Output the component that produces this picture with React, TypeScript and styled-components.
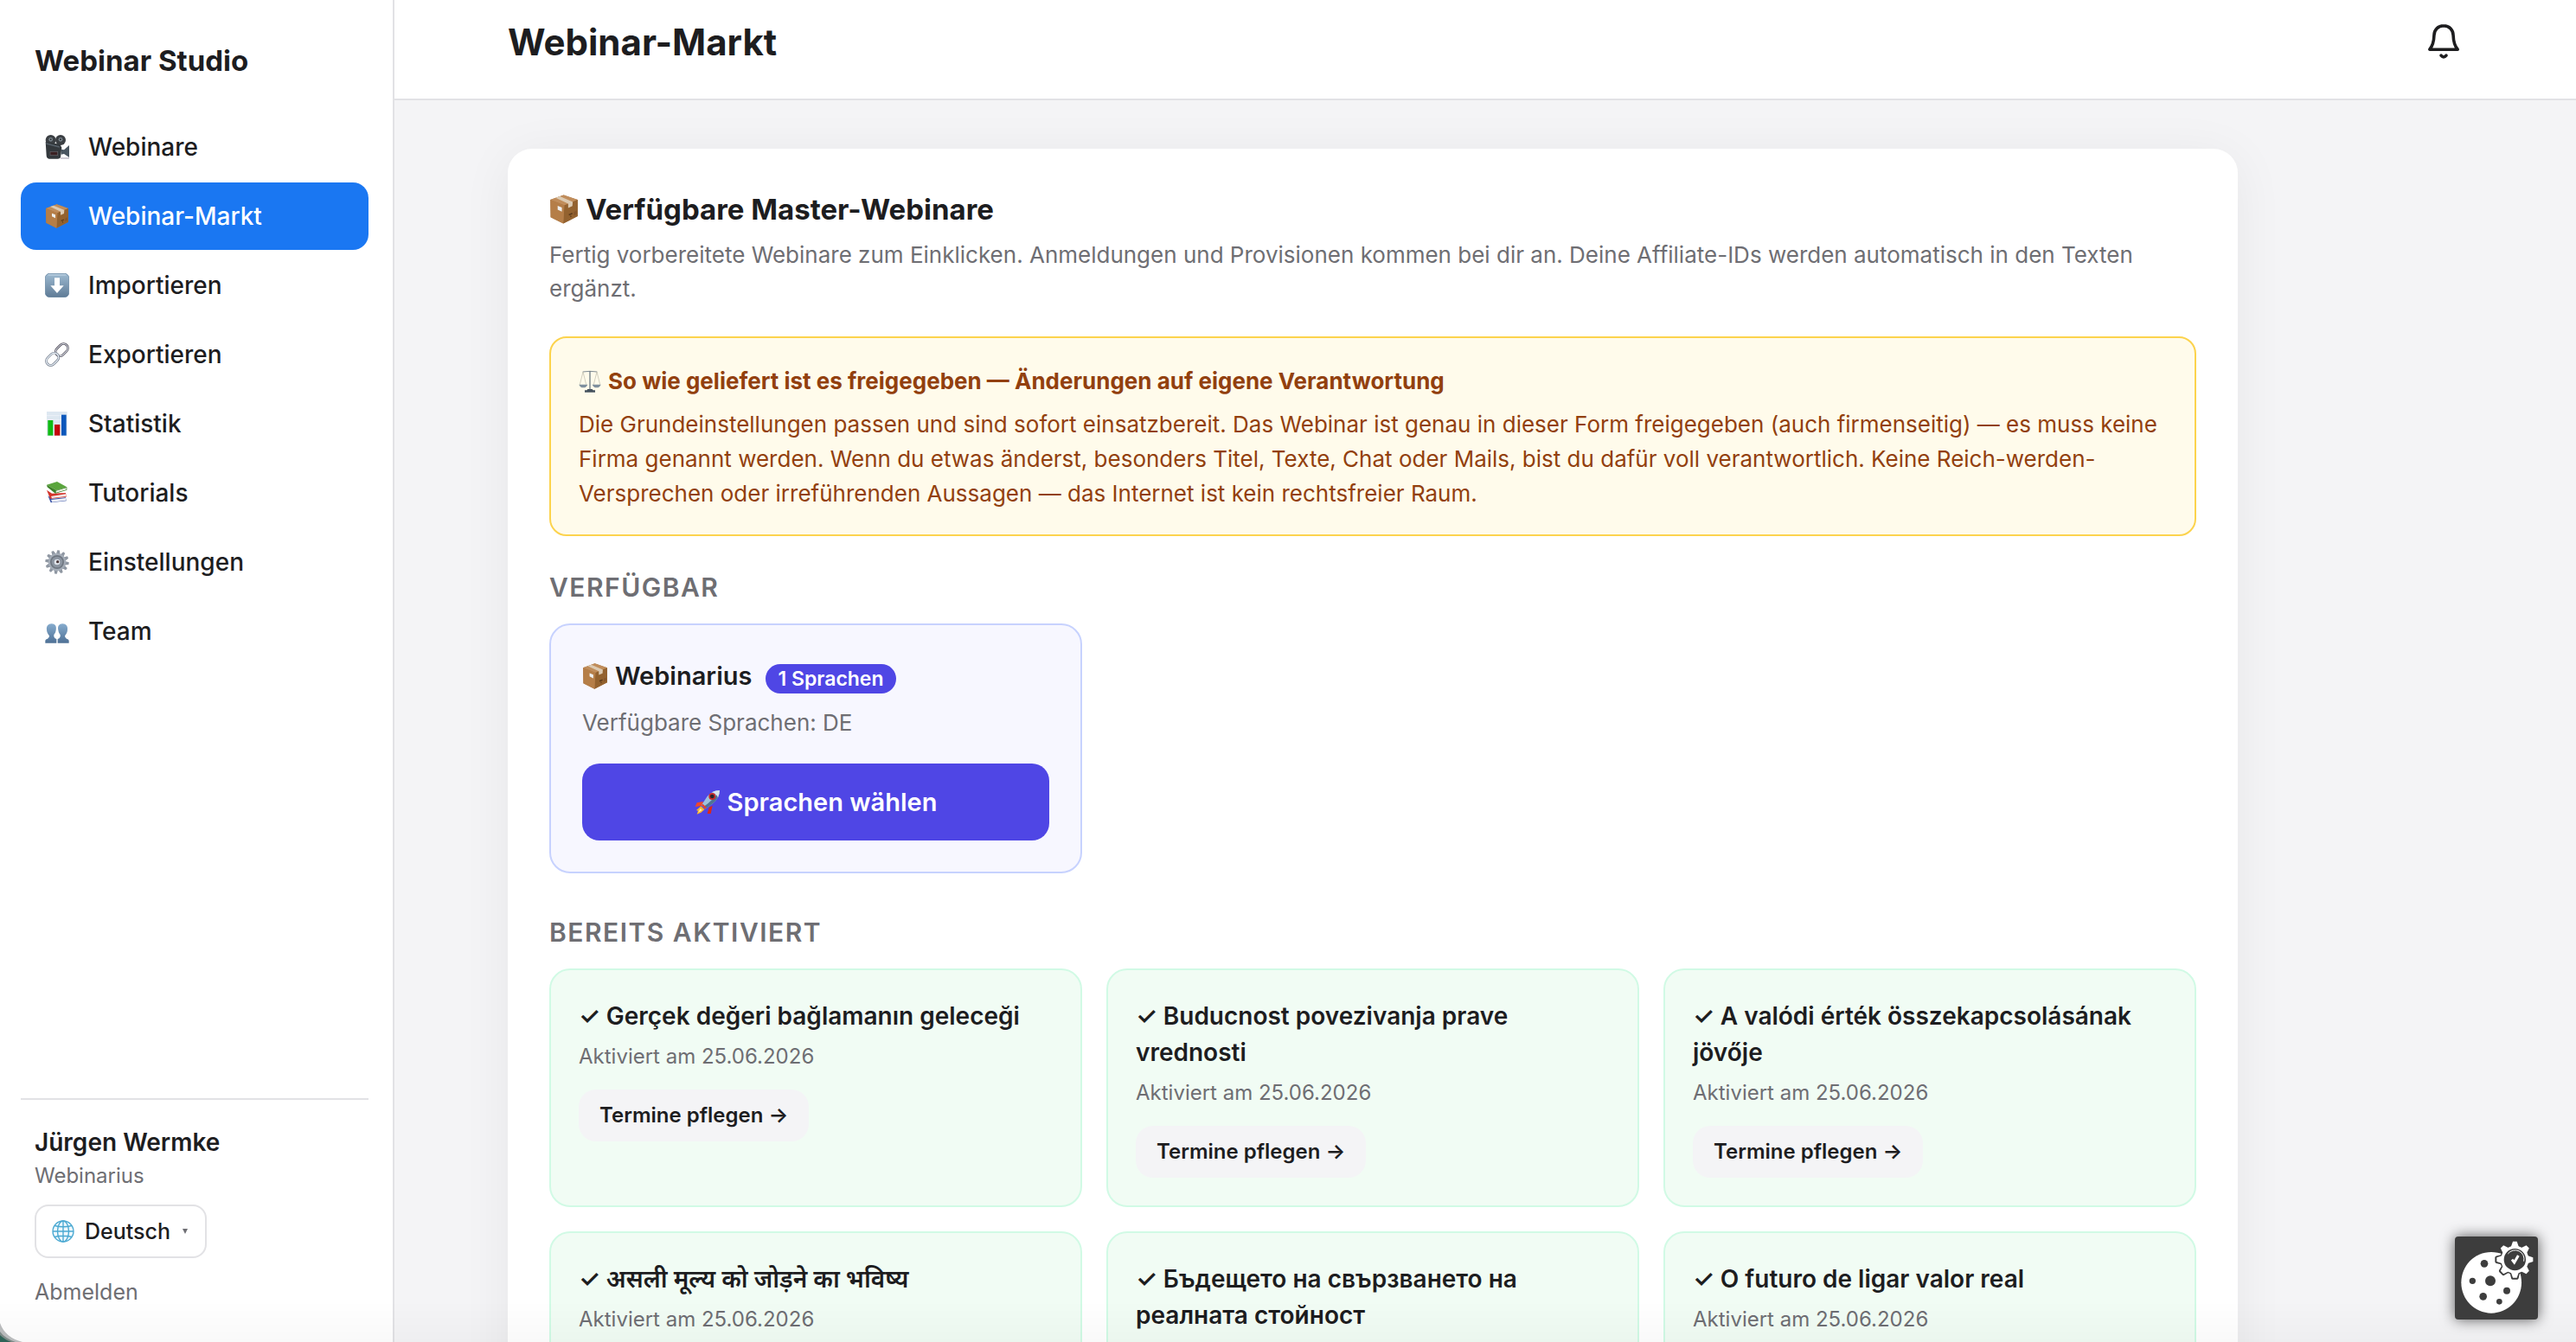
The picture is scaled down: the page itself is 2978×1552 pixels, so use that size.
import React from "react";
import styled, { createGlobalStyle } from "styled-components";

const GlobalStyle = createGlobalStyle`
  *, *::before, *::after { box-sizing: border-box; }
  body {
    margin: 0;
    background: #f4f4f6;
    color: #1d1d1f;
    font-family: Inter, "Noto Sans", "Liberation Sans", sans-serif;
    font-size: 26px;
    line-height: 1.5;
  }
  h1, h2, h3, p, ul { margin: 0; padding: 0; }
  button, select { font: inherit; color: inherit; }
`;

/* ---------- Icons ---------- */

const Glyph = styled.svg<{ $size: number }>`
  width: ${(p) => p.$size}px;
  height: ${(p) => p.$size}px;
  flex: none;
  display: block;
`;

type IconProps = { size?: number };

const CameraIcon = ({ size = 28 }: IconProps) => (
  <Glyph $size={size} viewBox="0 0 84 84" aria-hidden="true">
    <circle cx="20" cy="18" r="18" fill="#3b3f43" />
    <circle cx="54" cy="18" r="18" fill="#3b3f43" />
    <circle cx="20" cy="16" r="7" fill="#7d8890" />
    <circle cx="54" cy="16" r="7" fill="#7d8890" />
    <circle cx="20" cy="16" r="3" fill="#2a2d30" />
    <circle cx="54" cy="16" r="3" fill="#2a2d30" />
    <path d="M2 24 L52 32 L58 44 L54 78 Q52 83 44 83 L14 83 Q6 82 5 72 Z" fill="#33383c" />
    <path d="M4 30 L50 42" stroke="#57616a" strokeWidth="4" />
    <rect x="18" y="58" width="26" height="13" fill="#3a2022" stroke="#63646a" strokeWidth="2" />
    <path d="M56 50 L66 52 L84 36 L84 78 L66 66 L56 68 Z" fill="#4a5660" />
    <path d="M54 81 L84 81" stroke="#b9b3bf" strokeWidth="4" />
  </Glyph>
);

const PackageIcon = ({ size = 28 }: IconProps) => (
  <Glyph $size={size} viewBox="0 0 84 84" aria-hidden="true">
    <path d="M41 1 L81 15 L81 62 L40 83 L4 65 L3 15 Z" fill="#a97445" />
    <path d="M41 1 L81 15 L43 31 L3 15 Z" fill="#c08d5b" />
    <path d="M43 31 L81 15 L81 62 L40 83 Z" fill="#93622f" />
    <path d="M3 15 L43 31 L40 83 L4 65 Z" fill="#b57e48" />
    <path d="M18 9 L30 5 L67 21 L66 33 L54 38 L54 26 Z" fill="#dccab2" />
    <path d="M24 32 L36 37 L36 49 L24 43 Z" fill="#eef0f0" />
    <path d="M56 58 L66 54 M60 63 L63 62" stroke="#5b3a1a" strokeWidth="4" />
    <path d="M70 50 L78 46 L78 56 L70 60 Z" fill="#85552a" />
  </Glyph>
);

const ImportIcon = ({ size = 28 }: IconProps) => (
  <Glyph $size={size} viewBox="0 0 84 84" aria-hidden="true">
    <defs>
      <linearGradient id="imp" x1="0" y1="0" x2="0" y2="1">
        <stop offset="0" stopColor="#9dbad1" />
        <stop offset="1" stopColor="#5f7b96" />
      </linearGradient>
    </defs>
    <rect x="1" y="1" width="82" height="82" rx="15" fill="url(#imp)" stroke="#5c7d9c" strokeWidth="2" />
    <path d="M12 6 H72" stroke="#c3d6e5" strokeWidth="3" strokeLinecap="round" />
    <path d="M33 16 H51 V43 H65 L42 69 L19 43 H33 Z" fill="#fff" />
  </Glyph>
);

const LinkIcon = ({ size = 28 }: IconProps) => (
  <Glyph $size={size} viewBox="0 0 84 84" aria-hidden="true">
    <g fill="none" strokeLinecap="round">
      <rect x="34" y="11" width="48" height="30" rx="15" transform="rotate(-45 58 26)" stroke="#55505c" strokeWidth="8" />
      <rect x="34" y="11" width="48" height="30" rx="15" transform="rotate(-45 58 26)" stroke="#dfe5ee" strokeWidth="3" />
      <rect x="2" y="43" width="48" height="30" rx="15" transform="rotate(-45 26 58)" stroke="#66707f" strokeWidth="8" />
      <rect x="2" y="43" width="48" height="30" rx="15" transform="rotate(-45 26 58)" stroke="#e6edf5" strokeWidth="4" />
    </g>
  </Glyph>
);

const ChartIcon = ({ size = 28 }: IconProps) => (
  <Glyph $size={size} viewBox="0 0 84 84" aria-hidden="true">
    <rect x="6" y="0" width="71" height="84" fill="#dde7f1" />
    <path d="M6 14 H77 M6 28 H77" stroke="#f2f6fa" strokeWidth="2" />
    <rect x="10" y="30" width="18" height="53" fill="#10bb14" />
    <rect x="33" y="45" width="19" height="38" fill="#c4060a" />
    <rect x="57" y="11" width="17" height="72" fill="#0b57bb" />
  </Glyph>
);

const BooksIcon = ({ size = 28 }: IconProps) => (
  <Glyph $size={size} viewBox="0 0 84 84" aria-hidden="true">
    <path d="M10 52 L20 76 L74 70 L72 58 L24 62 Z" fill="#3c56a8" />
    <path d="M21 66 L73 60 L73 68 L25 74 Z" fill="#eef0f6" />
    <path d="M6 32 L18 62 L74 56 L72 42 L24 44 Z" fill="#d3352b" />
    <path d="M21 54 L72 46 L73 54 L24 60 Z" fill="#f3ecea" />
    <path d="M6 14 L42 3 L76 22 L40 33 Z" fill="#5aa53c" />
    <path d="M6 14 L8 22 L36 44 L76 32 L76 22 L40 33 Z" fill="#3c7f27" />
    <path d="M38 35 L74 25 L74 31 L38 41 Z" fill="#f2f5ec" />
  </Glyph>
);

const GearIcon = ({ size = 28 }: IconProps) => (
  <Glyph $size={size} viewBox="0 0 84 84" aria-hidden="true">
    {Array.from({ length: 12 }, (_, i) => (
      <path key={i} d="M37 1 H45 L49 16 H35 Z" fill="#8f97a2" transform={`rotate(${i * 30 + 8} 42 42)`} />
    ))}
    <circle cx="42" cy="42" r="31" fill="#a4acb7" />
    <circle cx="42" cy="42" r="24" fill="#6f7781" />
    <circle cx="42" cy="42" r="19" fill="#8c95a1" />
    <circle cx="42" cy="42" r="10" fill="#dfe4ea" />
    <circle cx="44" cy="41" r="5" fill="#4c3a3c" />
  </Glyph>
);

const TeamIcon = ({ size = 28 }: IconProps) => (
  <Glyph $size={size} viewBox="0 0 84 84" aria-hidden="true">
    <defs>
      <linearGradient id="team" x1="0" y1="0" x2="0" y2="1">
        <stop offset="0" stopColor="#86acce" />
        <stop offset="1" stopColor="#4e7095" />
      </linearGradient>
    </defs>
    <path
      d="M23 16 C35 16 41 25 38 38 C37 46 34 50 31 54 C30 62 32 66 40 69 V83 H1 V74 Q2 70 9 68 Q15 66 15 58 C9 50 6 45 6 37 C4 25 11 16 23 16 Z"
      fill="url(#team)"
    />
    <path
      d="M61 16 C49 16 43 25 46 38 C47 46 50 50 53 54 C54 62 52 66 44 69 V83 H83 V74 Q82 70 75 68 Q69 66 69 58 C75 50 78 45 78 37 C80 25 73 16 61 16 Z"
      fill="url(#team)"
    />
  </Glyph>
);

const GlobeIcon = ({ size = 26 }: IconProps) => (
  <Glyph $size={size} viewBox="0 0 76 76" aria-hidden="true">
    <g fill="none" stroke="#4ba9d2" strokeWidth="4">
      <circle cx="38" cy="38" r="35" fill="#eef8fd" />
      <ellipse cx="38" cy="38" rx="19" ry="35" />
      <path d="M38 3 V73 M3 38 H73 M9 19 Q38 26 67 19 M9 57 Q38 50 67 57" />
    </g>
  </Glyph>
);

const ScalesIcon = ({ size = 26 }: IconProps) => (
  <Glyph $size={size} viewBox="0 0 78 78" aria-hidden="true">
    <path d="M14 6 Q39 2 64 6" stroke="#7f8b93" strokeWidth="3" fill="none" />
    <path d="M39 3 V66" stroke="#6f7c86" strokeWidth="4" />
    <path d="M15 6 L4 50 M15 6 L26 50 M63 6 L52 50 M63 6 L74 50" stroke="#b9b8a8" strokeWidth="2" />
    <path d="M1 50 H31 Q27 61 16 61 Q5 61 1 50 Z M47 50 H77 Q73 61 62 61 Q51 61 47 50 Z" fill="#7e8f9d" />
    <path d="M31 66 H47 L50 70 H57 V77 H21 V70 H28 Z" fill="#45525e" />
  </Glyph>
);

const RocketIcon = ({ size = 30 }: IconProps) => (
  <Glyph $size={size} viewBox="0 0 90 90" aria-hidden="true">
    <path d="M30 42 L8 46 L2 60 L26 56 Z" fill="#f0472a" />
    <path d="M50 62 L44 84 L56 84 L62 56 Z" fill="#d9291c" />
    <path d="M22 58 L6 72 L12 74 L8 86 L22 80 L34 70 Z" fill="#fbb62f" />
    <path d="M20 66 L12 80 L26 72 Z" fill="#fff0a0" />
    <path d="M87 3 Q60 4 44 24 L24 54 L36 68 L64 48 Q86 30 87 3 Z" fill="#9fc1dc" />
    <path d="M87 3 Q86 30 64 48 L36 68 L30 61 Q66 36 87 3 Z" fill="#4f7396" />
    <path d="M87 3 Q72 3 61 9 Q76 14 81 28 Q87 16 87 3 Z" fill="#d8e4ee" />
    <circle cx="61" cy="24" r="12" fill="#c72a2a" />
    <circle cx="61" cy="24" r="7" fill="#22262d" />
    <path d="M28 50 L42 62 L36 68 L24 54 Z" fill="#e2402c" />
  </Glyph>
);

const BellIcon = () => (
  <svg width="48" height="48" viewBox="-2 -1 48 48" fill="none" aria-hidden="true">
    <g stroke="#1d1d1f" strokeWidth="3.6" strokeLinecap="round" strokeLinejoin="round">
      <path d="M24 5.8 C17.4 5.8 13 10.6 12.9 17 C12.7 24 11.6 28.6 7.8 33.2 H40.2 C36.4 28.6 35.3 24 35.1 17 C35 10.6 30.6 5.8 24 5.8 Z" />
      <path d="M21 40.2 Q24 43.8 27 40.2" />
    </g>
  </svg>
);

const CookieIcon = () => (
  <svg width="96" height="96" viewBox="0 0 288 288" aria-hidden="true">
    <path d="M126 54 C68 54 22 101 22 160 C22 219 68 266 126 266 C184 266 231 219 231 160 C231 100 186 54 126 54 Z" fill="#fff" />
    <g fill="#3d3d3d">
      <circle cx="102" cy="94" r="13" />
      <circle cx="61" cy="154" r="11" />
      <circle cx="123" cy="154" r="18" />
      <circle cx="180" cy="188" r="12" />
      <circle cx="98" cy="208" r="13" />
      <circle cx="154" cy="226" r="10" />
    </g>
    <g stroke="#3d3d3d" strokeWidth="12" strokeLinejoin="round">
      {Array.from({ length: 8 }, (_, i) => (
        <path key={i} d="M201 17 H215 L221 42 H195 Z" fill="#fff" transform={`rotate(${i * 45} 208 80)`} />
      ))}
      <circle cx="208" cy="80" r="46" fill="#fff" />
    </g>
    {Array.from({ length: 8 }, (_, i) => (
      <path key={i} d="M201 17 H215 L225 46 H191 Z" fill="#fff" transform={`rotate(${i * 45} 208 80)`} />
    ))}
    <circle cx="208" cy="80" r="48" fill="#fff" />
    <circle cx="208" cy="80" r="38" fill="#3d3d3d" />
    <path d="M184 60 A31 31 0 0 1 239 86" fill="none" stroke="#fff" strokeWidth="3" />
    <path d="M198 80 L206 90 L220 66" fill="none" stroke="#fff" strokeWidth="9" />
  </svg>
);

/* ---------- Layout ---------- */

const Shell = styled.div`
  display: grid;
  grid-template-columns: 456px minmax(0, 1fr);
  height: 100vh;
  overflow: hidden;
`;

const Sidebar = styled.aside`
  display: flex;
  flex-direction: column;
  min-height: 0;
  padding: 45px 28px 38px 24px;
  background: #fff;
  border-right: 2px solid #e2e2e5;
`;

const Brand = styled.div`
  padding: 0 16px;
  font-size: 33px;
  line-height: 51px;
  font-weight: 700;
`;

const Nav = styled.nav`
  display: flex;
  flex-direction: column;
  gap: 2px;
  margin-top: 35px;
`;

const NavLink = styled.a<{ $active?: boolean }>`
  display: flex;
  align-items: center;
  gap: 22px;
  height: 78px;
  padding: 0 28px;
  border-radius: 18px;
  font-size: 28px;
  font-weight: 500;
  text-decoration: none;
  color: ${(p) => (p.$active ? "#fff" : "#1d1d1f")};
  background: ${(p) => (p.$active ? "#1a77f2" : "transparent")};
`;

const Account = styled.div`
  display: flex;
  flex-direction: column;
  align-items: flex-start;
  margin-top: auto;
  padding: 28px 16px 0;
  border-top: 2px solid #e2e2e5;
`;

const AccountName = styled.div`
  font-size: 28px;
  line-height: 42px;
  font-weight: 600;
`;

const AccountOrg = styled.div`
  font-size: 24px;
  line-height: 36px;
  color: #6e6e73;
`;

const LanguageField = styled.label`
  display: flex;
  align-items: center;
  gap: 12px;
  height: 62px;
  margin-top: 15px;
  padding: 0 18px;
  border: 2px solid #e2e2e5;
  border-radius: 16px;
`;

const LanguageSelect = styled.select`
  appearance: none;
  field-sizing: content;
  padding: 0;
  border: 0;
  background: transparent;
  font-size: 25px;
  line-height: 40px;
  font-weight: 500;
`;

const Caret = styled.span`
  width: 0;
  height: 0;
  margin: 0 2px;
  border: 3px solid transparent;
  border-top: 6px solid #6e6e73;
  border-bottom: 0;
`;

const Logout = styled.button`
  margin-top: 20px;
  padding: 0;
  border: 0;
  background: none;
  color: #6e6e73;
  font-size: 25px;
  line-height: 39px;
`;

const Main = styled.main`
  min-width: 0;
  min-height: 0;
  overflow: hidden;
`;

const Topbar = styled.header`
  padding: 0 64px;
  background: #fff;
  border-bottom: 2px solid #e2e2e5;
`;

const TopbarInner = styled.div`
  display: flex;
  align-items: center;
  justify-content: space-between;
  max-width: 2260px;
  margin: 0 auto;
  padding: 16px 0 32px;
`;

const PageTitle = styled.h1`
  font-size: 42px;
  line-height: 66px;
  font-weight: 700;
`;

const BellButton = styled.button`
  display: flex;
  padding: 0;
  margin-bottom: 4px;
  border: 0;
  background: none;
`;

const Content = styled.div`
  padding: 56px 64px;
`;

const ContentInner = styled.div`
  max-width: 2260px;
  margin: 0 auto;
`;

const Panel = styled.section`
  max-width: 2000px;
  padding: 45px 48px;
  border-radius: 28px;
  background: #fff;
  box-shadow: 0 8px 60px rgba(0, 0, 0, 0.06);
`;

const PanelTitle = styled.h2`
  display: flex;
  align-items: center;
  gap: 8px;
  font-size: 33px;
  line-height: 50px;
  font-weight: 700;
`;

const Lead = styled.p`
  margin-top: 8px;
  font-size: 26px;
  line-height: 39px;
  color: #6e6e73;
`;

const Notice = styled.div`
  margin-top: 36px;
  padding: 30px 32px 27px;
  border: 2px solid #fcd34d;
  border-radius: 20px;
  background: #fffbeb;
  color: #92400e;
  line-height: 40px;
`;

const NoticeTitle = styled.h3`
  display: flex;
  align-items: center;
  gap: 8px;
  margin-bottom: 10px;
  font-size: 26px;
  font-weight: 700;
`;

const SectionLabel = styled.h3<{ $space: number }>`
  margin-top: ${(p) => p.$space}px;
  font-size: 30px;
  line-height: 42px;
  font-weight: 600;
  letter-spacing: 0.05em;
  text-transform: uppercase;
  color: #6e6e73;
`;

const CardGrid = styled.div`
  display: grid;
  grid-template-columns: repeat(3, minmax(0, 1fr));
  gap: 28px;
  margin-top: 21px;
`;

const OfferCard = styled.article`
  padding: 36px;
  border: 2px solid #c7d2fe;
  border-radius: 24px;
  background: #f7f7ff;
`;

const OfferHead = styled.div`
  display: flex;
  align-items: center;
  gap: 16px;
`;

const OfferTitle = styled.h4`
  display: flex;
  align-items: center;
  gap: 8px;
  margin: 0;
  font-size: 29px;
  line-height: 46px;
  font-weight: 600;
`;

const Pill = styled.span`
  margin-top: 5px;
  padding: 0 14px;
  border-radius: 17px;
  background: #4f46e5;
  color: #fff;
  font-size: 23px;
  line-height: 34px;
  font-weight: 600;
`;

const OfferMeta = styled.p`
  margin-top: 11px;
  font-size: 26px;
  line-height: 39px;
  color: #6e6e73;
`;

const PrimaryButton = styled.button`
  display: flex;
  align-items: center;
  justify-content: center;
  gap: 8px;
  width: 100%;
  height: 89px;
  margin-top: 28px;
  border: 0;
  border-radius: 20px;
  background: #4f46e5;
  color: #fff;
  font-size: 29px;
  font-weight: 600;
`;

const DoneCard = styled.article`
  padding: 32px;
  border: 2px solid #d1fae5;
  border-radius: 24px;
  background: #f1fcf4;
`;

const DoneTitle = styled.h4`
  margin: 0;
  font-size: 28px;
  line-height: 42px;
  font-weight: 600;
`;

const DoneMeta = styled.p`
  margin-top: 8px;
  font-size: 24px;
  line-height: 36px;
  color: #6e6e73;
`;

const SecondaryButton = styled.button`
  display: block;
  height: 60px;
  margin-top: 20px;
  padding: 0 24px;
  border: 0;
  border-radius: 20px;
  background: #f4f4f6;
  font-size: 24px;
  font-weight: 600;
`;

const CookieButton = styled.button`
  position: fixed;
  right: 44px;
  bottom: 26px;
  display: flex;
  padding: 0;
  border: 0;
  border-radius: 4px;
  background: #3d3d3d;
  box-shadow: 0 0 16px rgba(0, 0, 0, 0.65);
`;

const BottomShade = styled.div`
  position: fixed;
  inset: auto 0 0 0;
  height: 48px;
  pointer-events: none;
  background: linear-gradient(rgba(0, 0, 0, 0), rgba(0, 0, 0, 0.025));
`;

const WindowCorner = styled.svg`
  position: fixed;
  left: 0;
  bottom: 0;
  width: 26px;
  height: 22px;
  pointer-events: none;
`;

/* ---------- Data ---------- */

const navItems = [
  { label: "Webinare", Icon: CameraIcon },
  { label: "Webinar-Markt", Icon: PackageIcon, active: true },
  { label: "Importieren", Icon: ImportIcon },
  { label: "Exportieren", Icon: LinkIcon },
  { label: "Statistik", Icon: ChartIcon },
  { label: "Tutorials", Icon: BooksIcon },
  { label: "Einstellungen", Icon: GearIcon },
  { label: "Team", Icon: TeamIcon },
];

const activated = [
  { title: "Gerçek değeri bağlamanın geleceği", lang: "tr" },
  { title: "Buducnost povezivanja prave vrednosti", lang: "sr" },
  { title: "A valódi érték összekapcsolásának jövője", lang: "hu" },
  { title: "असली मूल्य को जोड़ने का भविष्य", lang: "hi" },
  { title: "Бъдещето на свързването на реалната стойност", lang: "bg" },
  { title: "O futuro de ligar valor real", lang: "pt" },
];

export default function App() {
  return (
    <>
      <GlobalStyle />
      <Shell>
        <Sidebar>
          <Brand>Webinar Studio</Brand>
          <Nav>
            {navItems.map(({ label, Icon, active }) => (
              <NavLink key={label} href="#" $active={active} aria-current={active ? "page" : undefined}>
                <Icon />
                {label}
              </NavLink>
            ))}
          </Nav>
          <Account>
            <AccountName>Jürgen Wermke</AccountName>
            <AccountOrg>Webinarius</AccountOrg>
            <LanguageField>
              <GlobeIcon />
              <LanguageSelect aria-label="Sprache" defaultValue="de">
                <option value="de">Deutsch</option>
              </LanguageSelect>
              <Caret />
            </LanguageField>
            <Logout type="button">Abmelden</Logout>
          </Account>
        </Sidebar>

        <Main>
          <Topbar>
            <TopbarInner>
              <PageTitle>Webinar-Markt</PageTitle>
              <BellButton type="button" aria-label="Benachrichtigungen">
                <BellIcon />
              </BellButton>
            </TopbarInner>
          </Topbar>

          <Content>
            <ContentInner>
              <Panel>
                <PanelTitle>
                  <PackageIcon size={34} />
                  Verfügbare Master-Webinare
                </PanelTitle>
                <Lead>
                  Fertig vorbereitete Webinare zum Einklicken. Anmeldungen und Provisionen kommen bei dir an. Deine
                  Affiliate-IDs werden automatisch in den Texten ergänzt.
                </Lead>

                <Notice>
                  <NoticeTitle>
                    <ScalesIcon />
                    So wie geliefert ist es freigegeben — Änderungen auf eigene Verantwortung
                  </NoticeTitle>
                  <p>
                    Die Grundeinstellungen passen und sind sofort einsatzbereit. Das Webinar ist genau in dieser Form
                    freigegeben (auch firmenseitig) — es muss keine Firma genannt werden. Wenn du etwas änderst,
                    besonders Titel, Texte, Chat oder Mails, bist du dafür voll verantwortlich. Keine
                    Reich-werden-Versprechen oder irreführenden Aussagen — das Internet ist kein rechtsfreier Raum.
                  </p>
                </Notice>

                <SectionLabel $space={38}>Verfügbar</SectionLabel>
                <CardGrid>
                  <OfferCard>
                    <OfferHead>
                      <OfferTitle>
                        <PackageIcon size={30} />
                        Webinarius
                      </OfferTitle>
                      <Pill>1 Sprachen</Pill>
                    </OfferHead>
                    <OfferMeta>Verfügbare Sprachen: DE</OfferMeta>
                    <PrimaryButton type="button">
                      <RocketIcon />
                      Sprachen wählen
                    </PrimaryButton>
                  </OfferCard>
                </CardGrid>

                <SectionLabel $space={47}>Bereits aktiviert</SectionLabel>
                <CardGrid>
                  {activated.map(({ title, lang }) => (
                    <DoneCard key={lang}>
                      <DoneTitle lang={lang}>{`✓ ${title}`}</DoneTitle>
                      <DoneMeta>Aktiviert am 25.06.2026</DoneMeta>
                      <SecondaryButton type="button">Termine pflegen →</SecondaryButton>
                    </DoneCard>
                  ))}
                </CardGrid>
              </Panel>
            </ContentInner>
          </Content>
        </Main>
      </Shell>

      <BottomShade />
      <WindowCorner viewBox="0 0 26 22" aria-hidden="true">
        <path d="M0 0 Q6 17 26 22 H0 Z" fill="#b9bbbc" />
        <path d="M0 10 Q6 18 18 22 H0 Z" fill="#7d8a87" />
        <path d="M0 14 Q5 19 13 22 H0 Z" fill="#2f6357" />
      </WindowCorner>
      <CookieButton type="button" aria-label="Cookie-Einstellungen">
        <CookieIcon />
      </CookieButton>
    </>
  );
}
